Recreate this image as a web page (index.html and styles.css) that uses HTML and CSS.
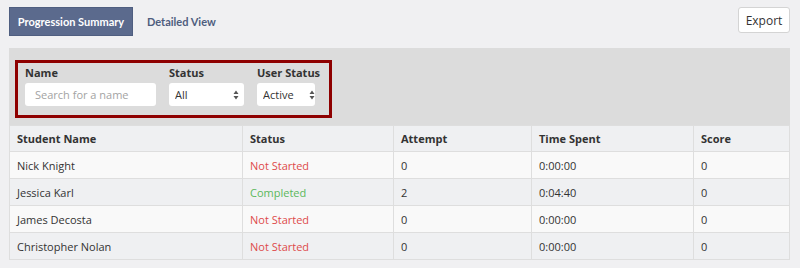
FILE: index.html
```html
<!doctype html>
<html lang="en">
<head>
  <meta charset="UTF-8">
  <title>Progression Summary</title>
  <link rel="stylesheet" href="styles.css">
</head>
<body>
  <div class="container">
    <div class="topbar">
      <div class="tabs">
        <a class="tab active">Progression Summary</a>
        <a class="tab">Detailed View</a>
      </div>
      <button class="export" type="button">Export</button>
    </div>

    <div class="panel">
      <div class="filters">
        <div class="field">
          <label>Name</label>
          <input class="search" type="text" placeholder="Search for a name">
        </div>
        <div class="field">
          <label>Status</label>
          <span class="select status-select">
            <select><option>All</option></select>
            <svg class="arrows" width="6" height="10" viewBox="0 0 6 10"><path d="M3 0.5 L5.5 4 H0.5 Z M3 9.5 L5.5 6 H0.5 Z" fill="#555"/></svg>
          </span>
        </div>
        <div class="field">
          <label>User Status</label>
          <span class="select user-select">
            <select><option>Active</option></select>
            <svg class="arrows" width="6" height="10" viewBox="0 0 6 10"><path d="M3 0.5 L5.5 4 H0.5 Z M3 9.5 L5.5 6 H0.5 Z" fill="#555"/></svg>
          </span>
        </div>
      </div>
    </div>

    <table class="grid">
      <thead>
        <tr>
          <th class="c-name">Student Name</th>
          <th class="c-status">Status</th>
          <th class="c-attempt">Attempt</th>
          <th class="c-time">Time Spent</th>
          <th>Score</th>
        </tr>
      </thead>
      <tbody>
        <tr>
          <td>Nick Knight</td>
          <td class="not-started">Not Started</td>
          <td>0</td>
          <td>0:00:00</td>
          <td>0</td>
        </tr>
        <tr>
          <td>Jessica Karl</td>
          <td class="completed">Completed</td>
          <td>2</td>
          <td>0:04:40</td>
          <td>0</td>
        </tr>
        <tr>
          <td>James Decosta</td>
          <td class="not-started">Not Started</td>
          <td>0</td>
          <td>0:00:00</td>
          <td>0</td>
        </tr>
        <tr>
          <td>Christopher Nolan</td>
          <td class="not-started">Not Started</td>
          <td>0</td>
          <td>0:00:00</td>
          <td>0</td>
        </tr>
      </tbody>
    </table>
  </div>
</body>
</html>
```

FILE: styles.css
```css
body {
  margin: 0;
  padding: 0;
  background-color: #f0f0f2;
  font-family: 'Open Sans', 'Liberation Sans', sans-serif;
  font-size: 11px;
  color: #333333;
}

.container {
  padding: 7px 10px 0 9px;
}

.topbar {
  display: flex;
  justify-content: space-between;
  align-items: flex-start;
}

.tabs {
  display: flex;
  align-items: center;
}

.tab {
  display: block;
  height: 29px;
  line-height: 29px;
  padding: 0 11px 0 12px;
  font-family: Lato, 'Open Sans', sans-serif;
  font-size: 11px;
  font-weight: 700;
  color: #4e5d7e;
  text-decoration: none;
  box-sizing: border-box;
}

.tab.active {
  width: 124px;
  background-color: #5b6a8d;
  color: #ffffff;
  border: 1px solid #4f5e80;
  line-height: 27px;
  text-align: center;
  padding: 0;
  margin-right: 2px;
}

.export {
  width: 52px;
  height: 26px;
  padding: 0;
  background-color: #ffffff;
  border: 1px solid #d4d4d4;
  border-radius: 3px;
  font-family: 'Open Sans', 'Liberation Sans', sans-serif;
  font-size: 12px;
  color: #333333;
}

.panel {
  margin-top: 12px;
  background-color: #dcdcdc;
  padding: 12px 6px 7px;
}

.filters {
  display: flex;
  width: 304px;
  height: 49px;
  border: 3px solid #8e0000;
  padding: 3px 0 0 7px;
  gap: 13px;
}

.field label {
  display: block;
  font-weight: 700;
  font-size: 11px;
  line-height: 14px;
  color: #333333;
  margin-bottom: 3px;
}

.search {
  width: 131px;
  height: 23px;
  box-sizing: border-box;
  border: none;
  border-radius: 3px;
  padding: 0 10px;
  font-family: 'Open Sans', 'Liberation Sans', sans-serif;
  font-size: 11px;
  color: #333333;
}

.search::placeholder {
  color: #a3a3a3;
}

.select {
  position: relative;
  display: block;
}

.select select {
  -webkit-appearance: none;
  appearance: none;
  height: 23px;
  box-sizing: border-box;
  border: none;
  border-radius: 3px;
  background-color: #ffffff;
  padding: 0 6px;
  font-family: 'Open Sans', 'Liberation Sans', sans-serif;
  font-size: 11px;
  color: #333333;
}

.status-select select {
  width: 75px;
}

.user-select select {
  width: 58px;
}

.arrows {
  position: absolute;
  right: 5px;
  top: 7px;
}

.grid {
  width: 781px;
  border-collapse: collapse;
  border: 1px solid #dcdcdc;
  table-layout: fixed;
}

.grid th,
.grid td {
  height: 27px;
  padding: 0 7px;
  text-align: left;
  border: 1px solid #dedede;
  box-sizing: border-box;
  color: #333333;
}

.grid th {
  font-weight: 700;
  background-color: #eff0f2;
  height: 26px;
}

.grid tbody tr:nth-child(odd) td {
  background-color: #f9f9f9;
}

.grid tbody tr:nth-child(even) td {
  background-color: #eff0f2;
}

.c-name { width: 233px; }
.c-status { width: 151px; }
.c-attempt { width: 138px; }
.c-time { width: 162px; }

.grid td.not-started {
  color: #de4b4b;
}

.grid td.completed {
  color: #5bb85b;
}
```
